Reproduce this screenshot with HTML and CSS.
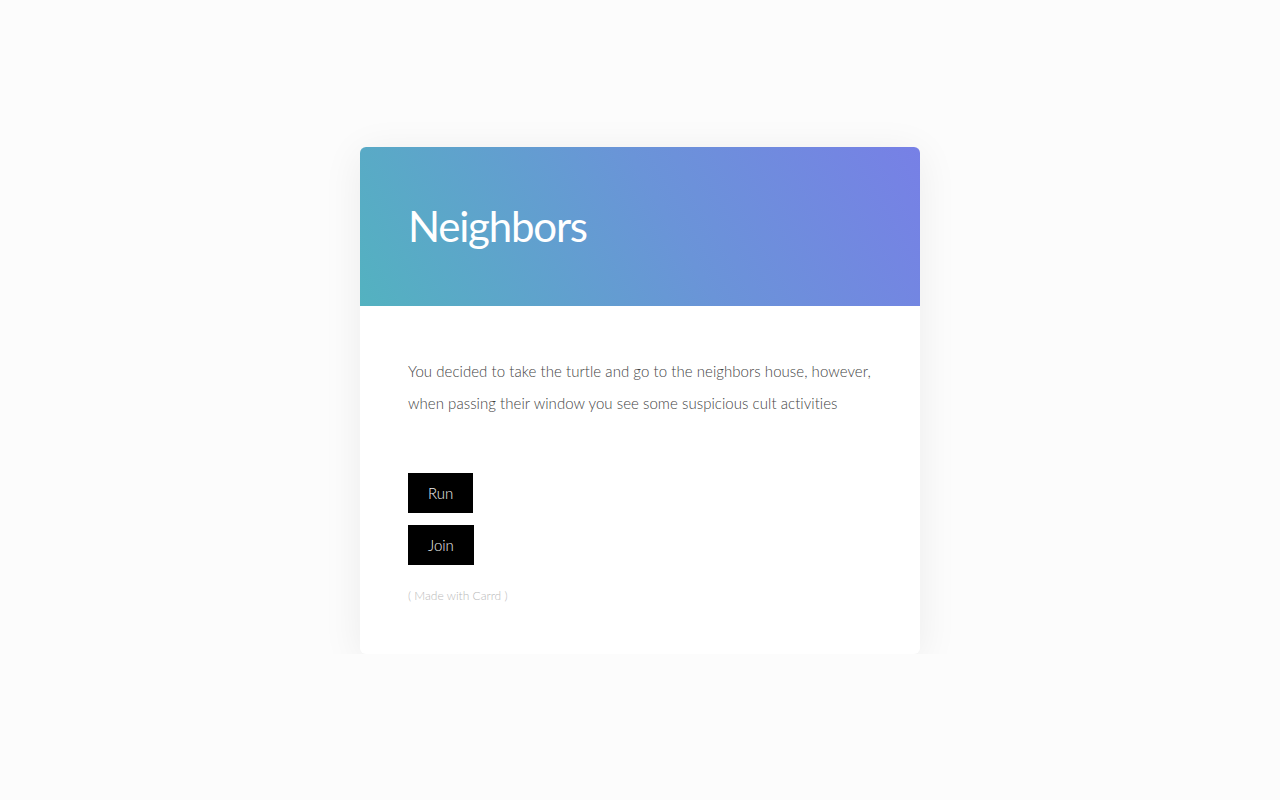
FILE: index.html
```html
<!DOCTYPE html>
<html lang="en">
<head>
<meta charset="utf-8">
<title>Neighbors</title>
<link rel="stylesheet" href="styles.css">
</head>
<body>
<main class="page">
  <div class="card">
    <header class="card-header">
      <h1 class="title">Neighbors</h1>
    </header>
    <section class="card-body">
      <p class="text">You decided to take the turtle and go to the neighbors house, however, when passing their window you see some suspicious cult activities</p>
      <div class="buttons">
        <a class="btn" href="#">Run</a>
        <a class="btn" href="#">Join</a>
      </div>
      <p class="credit">( Made with Carrd )</p>
    </section>
  </div>
</main>
</body>
</html>
```
FILE: styles.css
```css
html, body {
  margin: 0;
  padding: 0;
  background: #fcfcfc;
}
body {
  font-family: Lato, "Open Sans", "Liberation Sans", sans-serif;
  font-weight: 300;
}
.page {
  display: flex;
  justify-content: center;
  padding-top: 147px;
}
.card {
  width: 560px;
  background: #ffffff;
  border-radius: 6px;
  overflow: hidden;
  box-shadow: 0 6px 40px rgba(0, 0, 0, 0.07);
}
.card-header {
  height: 159px;
  box-sizing: border-box;
  padding: 0 48px;
  display: flex;
  align-items: center;
  background: linear-gradient(60deg, #53b2c0 0%, #6a94d8 55%, #7780e6 100%);
}
.title {
  margin: 0;
  color: #ffffff;
  font-size: 42px;
  font-weight: 400;
  letter-spacing: -1.2px;
  line-height: 1;
  padding-bottom: 2px;
}
.card-body {
  padding: 49px 48px 49px;
}
.text {
  margin: 0;
  color: #444444;
  font-size: 15px;
  letter-spacing: 0.05px;
  line-height: 32px;
}
.buttons {
  margin-top: 54px;
  display: flex;
  flex-direction: column;
  align-items: flex-start;
  gap: 12px;
}
.btn {
  display: inline-flex;
  align-items: center;
  height: 40px;
  padding: 0 20px;
  background: #000000;
  color: #eeeeee;
  font-size: 15px;
  text-decoration: none;
}
.credit {
  margin: 22px 0 0;
  color: #b8b8b8;
  font-size: 12px;
  line-height: 18px;
}
```
